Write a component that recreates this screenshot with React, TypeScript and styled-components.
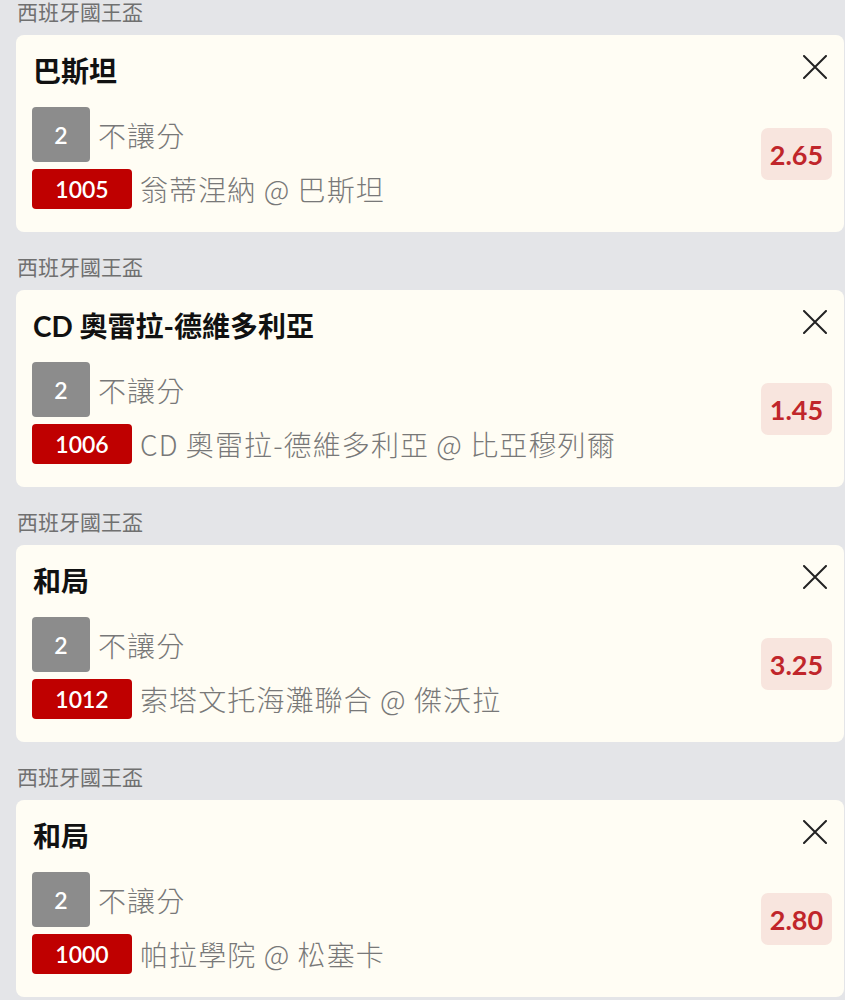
import React from "react";
import styled, { createGlobalStyle } from "styled-components";

const GlobalStyle = createGlobalStyle`
  html, body {
    margin: 0;
    padding: 0;
    background: #e4e5e8;
  }
  body {
    font-family: Lato, "Noto Sans CJK TC", sans-serif;
  }
`;

interface Bet {
  league: string;
  pick: string;
  handicap: string;
  handicapLabel: string;
  matchNo: string;
  match: string;
  odds: string;
}

const bets: Bet[] = [
  {
    league: "西班牙國王盃",
    pick: "巴斯坦",
    handicap: "2",
    handicapLabel: "不讓分",
    matchNo: "1005",
    match: "翁蒂涅納 @ 巴斯坦",
    odds: "2.65",
  },
  {
    league: "西班牙國王盃",
    pick: "CD 奧雷拉-德維多利亞",
    handicap: "2",
    handicapLabel: "不讓分",
    matchNo: "1006",
    match: "CD 奧雷拉-德維多利亞 @ 比亞穆列爾",
    odds: "1.45",
  },
  {
    league: "西班牙國王盃",
    pick: "和局",
    handicap: "2",
    handicapLabel: "不讓分",
    matchNo: "1012",
    match: "索塔文托海灘聯合 @ 傑沃拉",
    odds: "3.25",
  },
  {
    league: "西班牙國王盃",
    pick: "和局",
    handicap: "2",
    handicapLabel: "不讓分",
    matchNo: "1000",
    match: "帕拉學院 @ 松塞卡",
    odds: "2.80",
  },
];

const List = styled.div`
  display: flex;
  flex-direction: column;
  gap: 23px;
  padding: 0 1px 0 16px;
`;

const Section = styled.section`
  display: flex;
  flex-direction: column;
`;

const League = styled.div`
  font-size: 21px;
  line-height: 24px;
  color: #707070;
  margin: 0 0 11px 1px;
`;

const Card = styled.div`
  display: grid;
  grid-template-columns: 1fr auto;
  background: #fffdf4;
  border-radius: 8px;
  padding: 20px 12px 23px 16px;
`;

const Title = styled.div`
  font-size: 28px;
  font-weight: 700;
  line-height: 32px;
  color: #111;
  padding-left: 1px;
`;

const Close = styled.button`
  display: flex;
  align-self: start;
  justify-self: end;
  width: 24px;
  height: 24px;
  padding: 0;
  margin-right: 5px;
  border: none;
  background: none;
  color: #222;
`;

const Lines = styled.div`
  display: flex;
  flex-direction: column;
  gap: 7px;
  margin-top: 20px;
`;

const Line = styled.div`
  display: flex;
  align-items: center;
  gap: 8px;
`;

const Tag = styled.span<{ $tone: "gray" | "red" }>`
  display: flex;
  align-items: center;
  justify-content: center;
  width: ${(p) => (p.$tone === "gray" ? "58px" : "100px")};
  height: ${(p) => (p.$tone === "gray" ? "55px" : "40px")};
  border-radius: 4px;
  background: ${(p) => (p.$tone === "gray" ? "#8c8c8c" : "#bf0000")};
  color: #fff;
  font-size: 23px;
  font-weight: 600;
`;

const Info = styled.span`
  font-family: "Noto Sans CJK TC", sans-serif;
  font-size: 28px;
  font-weight: 300;
  letter-spacing: 1.1px;
  color: #787878;
  white-space: nowrap;
`;

const Odds = styled.div`
  align-self: center;
  justify-self: end;
  margin: 20px 0 8px;
  width: 71px;
  height: 52px;
  display: flex;
  align-items: center;
  justify-content: center;
  border-radius: 7px;
  background: #f8e5de;
  color: #c0262b;
  font-size: 27px;
  font-weight: 700;
`;

function CloseIcon() {
  return (
    <svg width="24" height="24" viewBox="0 0 24 24" fill="none">
      <path
        d="M1 1L23 23M23 1L1 23"
        stroke="currentColor"
        strokeWidth="2"
        strokeLinecap="round"
      />
    </svg>
  );
}

function BetCard({ bet }: { bet: Bet }) {
  return (
    <Section>
      <League>{bet.league}</League>
      <Card>
        <Title>{bet.pick}</Title>
        <Close aria-label="remove">
          <CloseIcon />
        </Close>
        <Lines>
          <Line>
            <Tag $tone="gray">{bet.handicap}</Tag>
            <Info>{bet.handicapLabel}</Info>
          </Line>
          <Line>
            <Tag $tone="red">{bet.matchNo}</Tag>
            <Info>{bet.match}</Info>
          </Line>
        </Lines>
        <Odds>{bet.odds}</Odds>
      </Card>
    </Section>
  );
}

export default function App() {
  return (
    <>
      <GlobalStyle />
      <List>
        {bets.map((bet, i) => (
          <BetCard key={i} bet={bet} />
        ))}
      </List>
    </>
  );
}
